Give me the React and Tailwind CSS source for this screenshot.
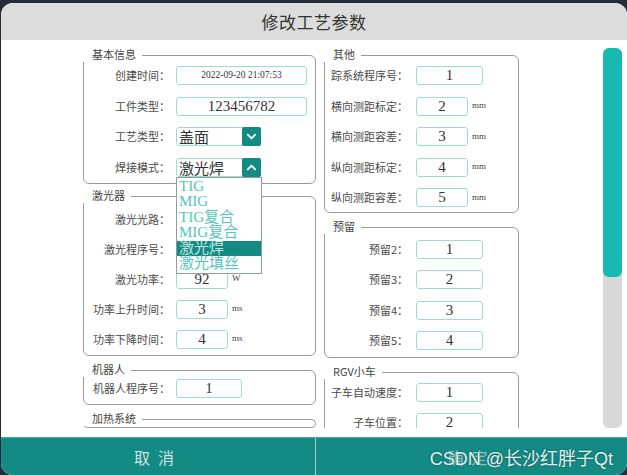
import React from "react";

const cjk = "font-['Noto_Sans_CJK_SC',sans-serif]";
const serif = "font-['Liberation_Serif','Noto_Sans_CJK_SC',serif]";

const Chevron = ({ up }) => (
  <svg width="11" height="11" viewBox="0 0 12 12" fill="none">
    <path
      d={up ? "M2 8 L6 4 L10 8" : "M2 4 L6 8 L10 4"}
      stroke="white"
      strokeWidth="2"
      strokeLinecap="round"
      strokeLinejoin="round"
    />
  </svg>
);

const Group = ({ title, className, children }) => (
  <div className={`relative border border-[#9a9a9a] rounded-[6px] ${className}`}>
    <span className={`absolute left-[-2px] top-[-10px] bg-white pl-[10px] pr-[6px] text-[11px] leading-[16px] text-[#444] ${cjk}`}>
      {title}
    </span>
    {children}
  </div>
);

const Box = ({ value, className, small }) => (
  <div
    className={`h-[19px] border border-[#9fdcd7] rounded-[3px] bg-white flex items-center justify-center text-[#333] ${serif} ${
      small ? "text-[9.5px]" : "text-[15px]"
    } ${className}`}
  >
    {value}
  </div>
);

const Row = ({ label, children, unit, right }) => (
  <div className="flex items-center h-[19px]">
    <span
      className={`shrink-0 text-right text-[11px] text-[#4a4a4a] whitespace-nowrap ${cjk} ${
        right ? "w-[83px] mr-[8px]" : "w-[86px] mr-[6px]"
      }`}
    >
      {label}
    </span>
    {children}
    {unit && <span className={`ml-[4px] text-[9px] text-[#444] ${serif}`}>{unit}</span>}
  </div>
);

const Combo = ({ value, up, children }) => (
  <div className="relative w-[85px] h-[19px] flex border border-[#9fdcd7] rounded-[3px] bg-white">
    <span className={`flex-1 pl-[2px] text-[15px] leading-[17px] text-[#333] ${cjk}`}>{value}</span>
    <span className="w-[19px] h-[19px] -mt-px -mr-px bg-[#138a84] rounded-[2px] flex items-center justify-center">
      <Chevron up={up} />
    </span>
    {children}
  </div>
);

const modes = ["TIG", "MIG", "TIG复合", "MIG复合", "激光焊", "激光填丝"];

const App = () => {
  return (
    <div className="w-[627px] h-[475px] bg-[#262b38] overflow-hidden">
      <div className="mt-[3px] ml-[1px] w-[626px] h-[472px] rounded-[12px] overflow-hidden bg-white flex flex-col">
        <div className={`h-[37px] shrink-0 bg-[#dcdcdc] flex items-center justify-center text-[17px] tracking-[0.5px] text-[#333] ${cjk}`}>
          修改工艺参数
        </div>

        <div className="h-[388px] shrink-0 flex pl-[82px] overflow-hidden">
          <div className="w-[233px] shrink-0 flex flex-col">
            <Group title="基本信息" className="mt-[15px] pt-[10px] pb-[6px] flex flex-col gap-[11.5px]">
              <Row label="创建时间：">
                <Box value="2022-09-20 21:07:53" small className="w-[131px]" />
              </Row>
              <Row label="工件类型：">
                <Box value="123456782" className="w-[131px]" />
              </Row>
              <Row label="工艺类型：">
                <Combo value="盖面" />
              </Row>
              <div className="relative z-10">
                <Row label="焊接模式：">
                  <Combo value="激光焊" up>
                    <div className="absolute left-[-1px] top-[18px] w-[86px] border border-[#8f9c9c] bg-white py-px">
                      {modes.map((m) => (
                        <div
                          key={m}
                          className={`h-[15.5px] leading-[15.5px] pl-[2px] text-[15px] ${serif} ${
                            m === "激光焊" ? "bg-[#138a84] text-[#bfe6e2]" : "text-[#55c5bf]"
                          }`}
                        >
                          {m}
                        </div>
                      ))}
                    </div>
                  </Combo>
                </Row>
              </div>
            </Group>

            <Group title="激光器" className="mt-[12px] pt-[13px] pb-[6px] flex flex-col gap-[11px]">
              <Row label="激光光路：">
                <Box value="" className="w-[52px]" />
              </Row>
              <Row label="激光程序号：">
                <Box value="" className="w-[52px]" />
              </Row>
              <Row label="激光功率：" unit="W">
                <Box value="92" className="w-[52px]" />
              </Row>
              <Row label="功率上升时间：" unit="ms">
                <Box value="3" className="w-[52px]" />
              </Row>
              <Row label="功率下降时间：" unit="ms">
                <Box value="4" className="w-[52px]" />
              </Row>
            </Group>

            <Group title="机器人" className="mt-[14px] pt-[8px] pb-[6px]">
              <Row label="机器人程序号：">
                <Box value="1" className="w-[66px]" />
              </Row>
            </Group>

            <Group title="加热系统" className="mt-[14px] h-[60px]" />
          </div>

          <div className="w-[195px] shrink-0 ml-[8px] flex flex-col">
            <Group title="其他" className="mt-[15px] pt-[10px] pb-[5px] flex flex-col gap-[11.5px]">
              <Row label="踪系统程序号：" right>
                <Box value="1" className="w-[67px]" />
              </Row>
              <Row label="横向测距标定：" right unit="mm">
                <Box value="2" className="w-[52px]" />
              </Row>
              <Row label="横向测距容差：" right unit="mm">
                <Box value="3" className="w-[52px]" />
              </Row>
              <Row label="纵向测距标定：" right unit="mm">
                <Box value="4" className="w-[52px]" />
              </Row>
              <Row label="纵向测距容差：" right unit="mm">
                <Box value="5" className="w-[52px]" />
              </Row>
            </Group>

            <Group title="预留" className="mt-[14px] pt-[11.5px] pb-[6.5px] flex flex-col gap-[11.5px]">
              <Row label="预留2：" right>
                <Box value="1" className="w-[67px]" />
              </Row>
              <Row label="预留3：" right>
                <Box value="2" className="w-[67px]" />
              </Row>
              <Row label="预留4：" right>
                <Box value="3" className="w-[67px]" />
              </Row>
              <Row label="预留5：" right>
                <Box value="4" className="w-[67px]" />
              </Row>
            </Group>

            <Group title="RGV小车" className="mt-[14px] pt-[10.5px] pb-[6px] flex flex-col gap-[11px]">
              <Row label="子车自动速度：" right>
                <Box value="1" className="w-[67px]" />
              </Row>
              <Row label="子车位置：" right>
                <Box value="2" className="w-[67px]" />
              </Row>
            </Group>
          </div>

          <div className="ml-auto mr-[5px] mt-[8px] w-[19px] shrink-0 bg-[#d8d8d8] rounded-[6px]">
            <div className="h-[229px] bg-[#18b9b1] rounded-[6px]" />
          </div>
        </div>

        <div className="h-[9px] shrink-0" />

        <div className="relative flex-1 flex bg-[#138a84] border-t border-[#3fb0a9]">
          <div className={`w-[314px] flex items-center justify-center text-[16px] tracking-[8px] text-[#cde4e1] ${cjk}`}>
            取消
          </div>
          <div className="w-px bg-[#9fcfcb]" />
          <div className={`flex-1 flex items-center justify-center text-[16px] tracking-[8px] text-[#8fc4bf] ${cjk}`}>
            确定
          </div>
          <span className="absolute right-[14px] top-[8px] text-[18px] text-white/90 font-['Liberation_Sans','Noto_Sans_CJK_SC',sans-serif] [text-shadow:0_0_2px_#0b4f4b]">
            CSDN @长沙红胖子Qt
          </span>
        </div>
      </div>
    </div>
  );
};

export default App;
